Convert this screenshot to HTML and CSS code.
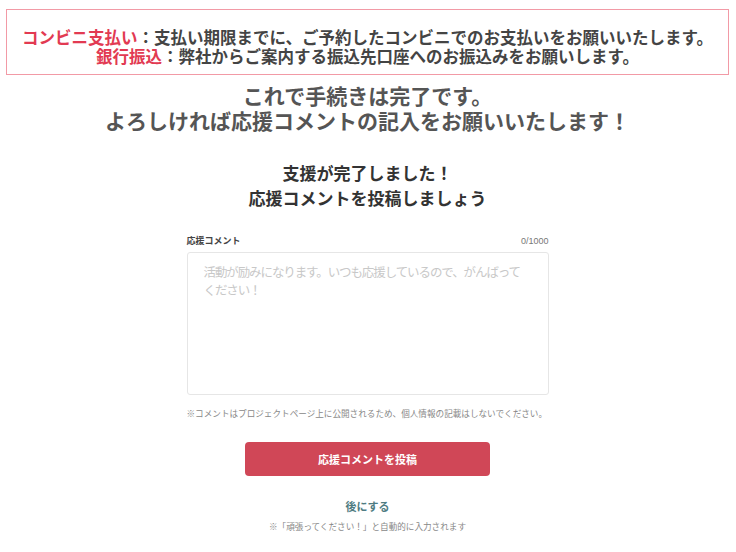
FILE: index.html
```html
<!DOCTYPE html>
<html lang="ja">
<head>
    <meta charset="UTF-8">
    <meta name="viewport" content="width=device-width, initial-scale=1.0">
    <title>応援コメント</title>
    <link rel="stylesheet" href="styles.css">
</head>
<body>

<div class="notice">
    <p><span class="accent">コンビニ支払い</span>：支払い期限までに、ご予約したコンビニでのお支払いをお願いいたします。</p>
    <p><span class="accent">銀行振込</span>：弊社からご案内する振込先口座へのお振込みをお願いします。</p>
</div>

<h1 class="done">これで手続きは完了です。<br>よろしければ応援コメントの記入をお願いいたします！</h1>

<h2 class="title">支援が完了しました！<br>応援コメントを投稿しましょう</h2>

<div class="form">
    <div class="form-head">
        <span class="label">応援コメント</span>
        <span class="count">0/1000</span>
    </div>
    <textarea class="comment" placeholder="活動が励みになります。いつも応援しているので、がんばってください！"></textarea>
    <p class="caution">※コメントはプロジェクトページ上に公開されるため、個人情報の記載はしないでください。</p>
    <button class="post-btn">応援コメントを投稿</button>
    <a class="later" href="#">後にする</a>
    <p class="auto">※「頑張ってください！」と自動的に入力されます</p>
</div>

</body>
</html>
```

FILE: styles.css
```css
body {
    font-family: "Noto Sans CJK JP", "Noto Sans", sans-serif;
    margin: 0;
    padding: 9px 7px 0 6px;
    background-color: #fff;
    color: #333;
}
.notice {
    border: 1px solid #f29aa6;
    height: 66px;
    padding-top: 18px;
    box-sizing: border-box;
    text-align: center;
    font-size: 16.5px;
    font-weight: bold;
    color: #444;
    line-height: 19px;
}
.notice p {
    margin: 0;
}
.accent {
    color: #e23a52;
}
.done {
    margin: 8px 0 0;
    text-align: center;
    font-size: 21px;
    line-height: 25px;
    color: #555;
    font-weight: bold;
}
.title {
    margin: 27px 0 0;
    text-align: center;
    font-size: 17px;
    line-height: 25px;
    color: #333;
    font-weight: bold;
}
.form {
    width: 362px;
    margin: 25px auto 0;
    display: flex;
    flex-direction: column;
    align-items: center;
}
.form-head {
    align-self: stretch;
    display: flex;
    justify-content: space-between;
    font-size: 9px;
    line-height: 12px;
}
.label {
    color: #444;
    font-weight: bold;
}
.count {
    color: #777;
    font-family: "Liberation Sans", sans-serif;
}
.comment {
    align-self: stretch;
    margin-top: 5px;
    height: 143px;
    box-sizing: border-box;
    border: 1px solid #e6e6e6;
    border-radius: 3px;
    padding: 10px 26px 10px 16px;
    font-family: inherit;
    font-size: 12.5px;
    letter-spacing: -1.1px;
    line-height: 18px;
    resize: none;
}
.comment::placeholder {
    color: #c8c8c8;
}
.caution {
    align-self: stretch;
    margin: 12px 0 0;
    font-size: 8.6px;
    line-height: 12px;
    color: #888;
}
.post-btn {
    margin-top: 23px;
    width: 245px;
    height: 34px;
    border: none;
    border-radius: 4px;
    background-color: #d04757;
    color: #fff;
    font-family: inherit;
    font-size: 11px;
    font-weight: bold;
    cursor: pointer;
}
.later {
    margin-top: 23px;
    font-size: 11px;
    line-height: 14px;
    font-weight: bold;
    color: #4f7c82;
    text-decoration: none;
}
.auto {
    margin: 7px 0 0;
    font-size: 8.6px;
    line-height: 12px;
    color: #888;
}
```
